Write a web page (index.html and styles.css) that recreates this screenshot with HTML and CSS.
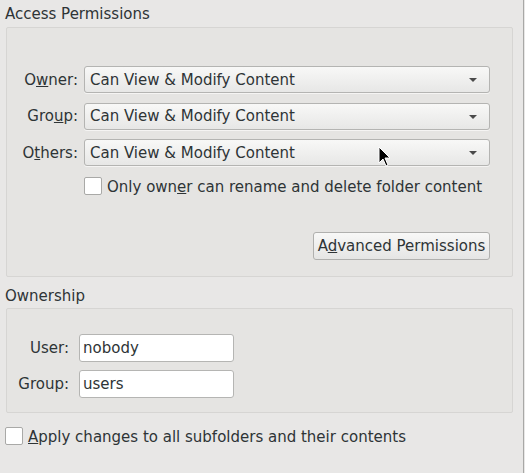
FILE: index.html
```html
<!DOCTYPE html>
<html>
<head>
<meta charset="utf-8">
<link rel="stylesheet" href="styles.css">
</head>
<body>
<div class="window">
  <div class="title first">Access Permissions</div>
  <div class="group perms">
    <div class="row">
      <span class="label">O<u>w</u>ner:</span>
      <div class="combo"><span>Can View &amp; Modify Content</span><span class="arrow"></span></div>
    </div>
    <div class="row">
      <span class="label">Gro<u>u</u>p:</span>
      <div class="combo"><span>Can View &amp; Modify Content</span><span class="arrow"></span></div>
    </div>
    <div class="row">
      <span class="label">O<u>t</u>hers:</span>
      <div class="combo"><span>Can View &amp; Modify Content</span><span class="arrow"></span></div>
    </div>
    <div class="row check-row">
      <span class="label"></span>
      <label class="check"><span class="box"></span><span class="check-text">Only own<u>e</u>r can rename and delete folder content</span></label>
    </div>
    <div class="actions">
      <button class="button">A<u>d</u>vanced Permissions</button>
    </div>
  </div>
  <div class="title second">Ownership</div>
  <div class="group owner">
    <div class="row">
      <span class="label">User:</span>
      <div class="entry">nobody</div>
    </div>
    <div class="row">
      <span class="label">Group:</span>
      <div class="entry">users</div>
    </div>
  </div>
  <label class="check apply"><span class="box"></span><span class="check-text"><u>A</u>pply changes to all subfolders and their contents</span></label>
  <svg class="cursor" width="14" height="22" viewBox="0 0 14 22"><path d="M1 1 L1 17 L5 13 L8 20 L10 19 L7 12 L12 12 Z" fill="#000" stroke="#fff" stroke-width="1"/></svg>
</div>
</body>
</html>
```
FILE: styles.css
```css
html, body {
  margin: 0;
  padding: 0;
  background: #e8e7e6;
}
.window {
  position: relative;
  width: 523px;
  height: 473px;
  border-right: 1px solid #a8a8a6;
  box-sizing: content-box;
  font-family: "DejaVu Sans", sans-serif;
  font-size: 15px;
  line-height: 18px;
  color: #2e3436;
}
.title {
  line-height: 17px;
  padding-left: 5px;
}
.title.first {
  padding-top: 6px;
  padding-bottom: 4px;
}
.title.second {
  padding-top: 11px;
  padding-bottom: 3px;
}
.group {
  margin-left: 6px;
  border: 1px solid #d6d5d3;
  border-radius: 2px;
  background: #e5e4e2;
  display: flex;
  flex-direction: column;
}
.perms {
  padding: 38px 22px 16px 5px;
  width: 478px;
  gap: 9.5px;
}
.owner {
  padding: 25px 22px 14px 5px;
  width: 478px;
  gap: 8px;
}
.row {
  display: flex;
  align-items: center;
}
.perms .label {
  width: 66px;
  margin-right: 6px;
  text-align: right;
}
.owner .label {
  width: 57px;
  margin-right: 10px;
  text-align: right;
}
.combo {
  flex: 1;
  height: 25px;
  border: 1px solid #b4b4b2;
  border-radius: 3px;
  background: linear-gradient(#f8f8f7, #e7e7e6);
  box-shadow: 0 1px 0 rgba(255,255,255,0.6);
  display: flex;
  align-items: center;
  justify-content: space-between;
  padding: 0 12px 0 5px;
}
.arrow {
  width: 0;
  height: 0;
  border-left: 4px solid transparent;
  border-right: 4px solid transparent;
  border-top: 4px solid #4a4a4a;
  margin-top: 1px;
}
.check-row {
  margin-top: 1px;
  height: 18px;
}
.check {
  display: flex;
  align-items: center;
  gap: 5px;
}
.check-text {
  padding-top: 3px;
}
.box {
  width: 16px;
  height: 16px;
  border: 1px solid #a9a9a7;
  border-radius: 2px;
  background: #ffffff;
  flex: none;
}
.actions {
  display: flex;
  justify-content: flex-end;
  margin-top: 28px;
}
.button {
  font: inherit;
  color: inherit;
  height: 28px;
  width: 177px;
  padding: 0;
  border: 1px solid #b0b0ae;
  border-radius: 3px;
  background: linear-gradient(#f8f8f7, #e5e5e4);
}
.entry {
  width: 150px;
  height: 26px;
  line-height: 26px;
  padding-left: 3px;
  border: 1px solid #b5b5b3;
  border-radius: 3px;
  background: #ffffff;
}
.apply {
  margin-top: 12px;
  margin-left: 5px;
  width: max-content;
}
.cursor {
  position: absolute;
  left: 378px;
  top: 146px;
}
```
